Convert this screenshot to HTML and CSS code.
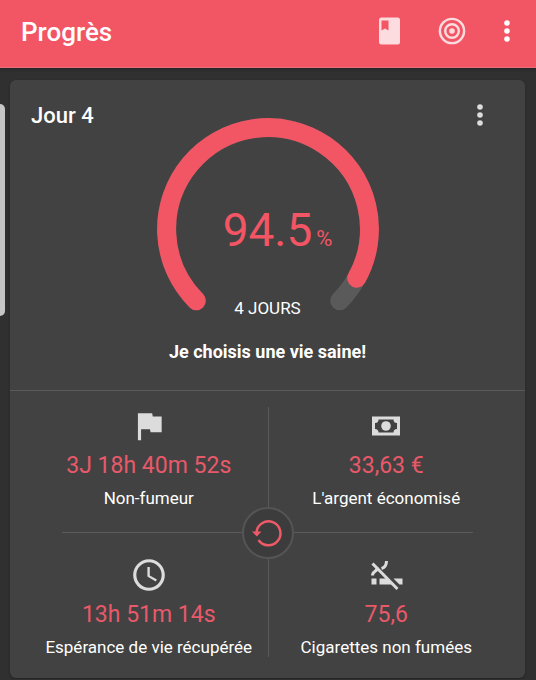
FILE: index.html
```html
<!DOCTYPE html>
<html lang="fr">
<head>
<meta charset="utf-8">
<meta name="viewport" content="width=device-width, initial-scale=1">
<title>Progrès</title>
<link rel="stylesheet" href="styles.css">
</head>
<body>
<header class="appbar">
  <h1 class="appbar-title">Progrès</h1>
  <nav class="appbar-actions">
    <button class="icon-button" type="button" aria-label="Journal">
      <svg class="icon icon-soft" viewBox="0 0 38 38"><path fill-rule="evenodd" d="M10.500 5.500h16a2.500 2.500 0 0 1 2.500 2.500v22a2.500 2.500 0 0 1-2.500 2.500h-16a2.500 2.500 0 0 1-2.500-2.500v-22a2.500 2.500 0 0 1 2.500-2.500zM10.500 8.500v10l3.500-2 3.500 2v-10z"/></svg>
    </button>
    <button class="icon-button" type="button" aria-label="Objectifs">
      <svg class="icon icon-soft" viewBox="0 0 38 38"><g fill="none" stroke="currentColor" stroke-width="2.400"><circle cx="19" cy="19" r="12.100"/><circle cx="19" cy="19" r="6.800"/></g><circle cx="19" cy="19" r="2.800"/></svg>
    </button>
    <button class="icon-button icon-button-narrow" type="button" aria-label="Plus d'options">
      <svg class="icon-dots" viewBox="0 0 8 24"><circle cx="4" cy="4" r="2.800"/><circle cx="4" cy="12" r="2.800"/><circle cx="4" cy="20" r="2.800"/></svg>
    </button>
  </nav>
</header>

<div class="edge-handle"></div>

<main class="card">
  <section class="summary">
    <h2 class="summary-title">Jour 4</h2>
    <div class="gauge">
      <svg class="gauge-ring" viewBox="0 0 222 201">
        <path class="gauge-track" d="M39.300 182.700A101.400 101.400 0 1 1 182.700 182.700"/>
        <path class="gauge-progress" d="M39.300 182.700A101.400 101.400 0 1 1 199.700 160.200"/>
      </svg>
      <p class="gauge-value">94.5<span class="gauge-unit">%</span></p>
      <p class="gauge-caption">4 JOURS</p>
    </div>
    <button class="icon-button icon-button-narrow summary-menu" type="button" aria-label="Options de la carte">
      <svg class="icon-dots icon-pale" viewBox="0 0 8 24"><circle cx="4" cy="4" r="2.800"/><circle cx="4" cy="12" r="2.800"/><circle cx="4" cy="20" r="2.800"/></svg>
    </button>
    <p class="motto">Je choisis une vie saine!</p>
  </section>

  <section class="stats">
    <div class="stat stat-top">
      <svg class="icon icon-pale" viewBox="0 0 24 24"><path d="M14.400 6L14 4H5v17h2v-7h5.600l.4 2h7V6z"/></svg>
      <p class="stat-value">3J 18h 40m 52s</p>
      <p class="stat-label">Non-fumeur</p>
    </div>
    <div class="stat stat-top">
      <svg class="icon icon-pale" viewBox="0 0 38 38"><path fill-rule="evenodd" d="M5 9.500h28v19H5zM11.500 12.500a3.500 3.500 0 0 1-3.500 3.500v6a3.500 3.500 0 0 1 3.500 3.500h15a3.500 3.500 0 0 1 3.500-3.500v-6a3.500 3.500 0 0 1-3.500-3.500z"/><circle cx="19" cy="19" r="4.800"/></svg>
      <p class="stat-value">33,63 €</p>
      <p class="stat-label">L'argent économisé</p>
    </div>
    <div class="stats-rule">
      <button class="reset" type="button" aria-label="Recommencer">
        <svg class="reset-icon" viewBox="0 0 38 38"><path class="reset-arc" d="M7.500 18.500A12 12 0 1 1 9.500 26"/><path d="M3 17.500h9.500L7.800 22.500z"/></svg>
      </button>
    </div>
    <div class="stat stat-bottom">
      <svg class="icon icon-pale" viewBox="0 0 24 24"><path d="M11.990 2C6.470 2 2 6.480 2 12s4.470 10 9.990 10C17.520 22 22 17.520 22 12S17.520 2 11.990 2zM12 20c-4.420 0-8-3.580-8-8s3.580-8 8-8 8 3.580 8 8-3.580 8-8 8zm.5-13H11v6l5.250 3.150.75-1.230-4.500-2.670z"/></svg>
      <p class="stat-value">13h 51m 14s</p>
      <p class="stat-label">Espérance de vie récupérée</p>
    </div>
    <div class="stat stat-bottom">
      <svg class="icon icon-pale" viewBox="0 0 38 38"><path d="M4.500 22.500h5v6h-5zM12.500 22.500h8l6 6h-14zM26.500 22.500h9v6h-3z"/><g fill="none" stroke="currentColor" stroke-width="3"><path d="M5.500 7.500l25 25.500"/><path d="M5.500 19.500c0-5 4.500-3 5-8M19.500 5c0 4.500-1.500 6.500-5 7.500"/></g></svg>
      <p class="stat-value">75,6</p>
      <p class="stat-label">Cigarettes non fumées</p>
    </div>
  </section>
</main>
</body>
</html>
```

FILE: styles.css
```css
* {
  box-sizing: border-box;
}

body {
  margin: 0;
  background: #303030;
  color: #fff;
  font-family: Roboto, "Liberation Sans", sans-serif;
  font-size: 17px;
  line-height: 22px;
}

h1, h2, p {
  margin: 0;
}

button {
  padding: 0;
  border: 0;
  background: none;
  color: inherit;
  cursor: pointer;
}

svg {
  display: block;
  fill: currentColor;
}

.appbar {
  display: flex;
  align-items: center;
  justify-content: space-between;
  height: 68px;
  padding: 0 17px 6px 21px;
  background: #f25563;
  border-bottom: 1px solid #e8707a;
  box-shadow: 0 1px 2px #222;
}

.appbar-title {
  padding-top: 2px;
  font-size: 26px;
  font-weight: 500;
  line-height: 32px;
}

.appbar-actions {
  display: flex;
  align-items: center;
  gap: 24px;
}

.icon-button {
  display: grid;
  place-items: center;
  width: 38px;
  height: 38px;
}

.icon-button-narrow {
  width: 24px;
}

.icon {
  width: 38px;
  height: 38px;
}

.icon-dots {
  width: 8px;
  height: 24px;
}

.icon-soft {
  color: #fcdcdf;
}

.icon-pale {
  color: #dcdcdc;
}

.edge-handle {
  position: absolute;
  top: 104px;
  left: 0;
  width: 5px;
  height: 212px;
  border-radius: 0 5px 5px 0;
  background: #c6c6c6;
}

.card {
  margin: 12px 11px 1px 10px;
  border-radius: 6px;
  background: #424242;
  box-shadow: 0 1px 2px #222;
}

.summary {
  display: grid;
  grid-template-columns: 1fr 222px 1fr;
  padding: 0 21px 27px;
  border-bottom: 1px solid #5a5a5a;
}

.summary-title {
  padding-top: 24px;
  font-size: 22px;
  font-weight: 500;
  line-height: 24px;
}

.summary-menu {
  justify-self: end;
  margin: 16px 12px 0 0;
}

.gauge {
  display: grid;
  justify-items: center;
  margin-top: 38px;
}

.gauge > * {
  grid-area: 1 / 1;
}

.gauge-ring {
  width: 100%;
}

.gauge-track,
.gauge-progress {
  fill: none;
  stroke: #5a5a5a;
  stroke-width: 19;
  stroke-linecap: round;
}

.gauge-progress {
  stroke: #f25563;
}

.gauge-value {
  position: relative;
  align-self: center;
  margin-top: 22px;
  color: #f25563;
  font-size: 46px;
  line-height: 52px;
}

.gauge-unit {
  position: absolute;
  left: 100%;
  bottom: 0;
  padding-left: 4px;
  font-size: 22px;
  line-height: 34px;
}

.gauge-caption {
  align-self: end;
}

.motto {
  grid-column: 1 / -1;
  margin-top: 22px;
  font-size: 18px;
  font-weight: 700;
  text-align: center;
}

.stats {
  position: relative;
  display: grid;
  grid-template-columns: 1fr 1fr;
  padding: 0 20px;
}

.stats::before {
  content: "";
  position: absolute;
  top: 16px;
  bottom: 21px;
  left: 50%;
  width: 1px;
  background: #5a5a5a;
}

.stat {
  display: flex;
  flex-direction: column;
  align-items: center;
  gap: 4px;
  text-align: center;
}

.stat-top {
  padding: 16px 0 23px;
}

.stat-bottom {
  padding: 23px 0 20px;
}

.stat-value {
  color: #e8596a;
  font-size: 23px;
  line-height: 34px;
}

.stats-rule {
  position: relative;
  grid-column: 1 / -1;
  height: 1px;
  margin: 0 32px;
  background: #5a5a5a;
}

.reset {
  position: absolute;
  top: 50%;
  left: 50%;
  display: grid;
  place-items: center;
  width: 52px;
  height: 52px;
  border: 2px solid #555;
  border-radius: 50%;
  background: #3c3c3c;
  color: #ee5a68;
  transform: translate(-50%, -50%);
}

.reset-icon {
  width: 38px;
  height: 38px;
}

.reset-arc {
  fill: none;
  stroke: currentColor;
  stroke-width: 2.5;
}
```
